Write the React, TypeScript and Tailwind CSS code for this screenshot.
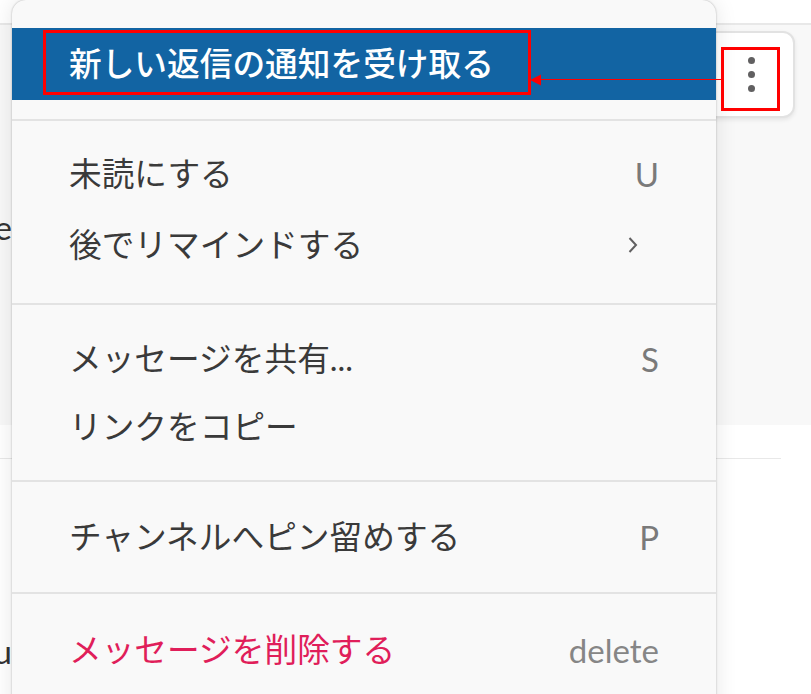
const font = { fontFamily: '"Lato", "Noto Sans CJK JP", sans-serif' };

function Item({ label, hint, top }: { label: string; hint?: React.ReactNode; top: string }) {
  return (
    <div className={`flex items-center justify-between pl-[57px] pr-[57px] ${top}`}>
      <span className="text-[32.7px] leading-[40px] text-[#3a3a3a] whitespace-nowrap">{label}</span>
      {hint}
    </div>
  );
}

function Key({ children }: { children: string }) {
  return <span className="text-[33px] leading-[40px] text-[#7a7a7a]">{children}</span>;
}

export default function App() {
  return (
    <div className="relative w-[811px] h-[694px] overflow-hidden bg-white" style={font}>
      {/* message behind the menu */}
      <div className="h-[25px] border-b-2 border-[#e8e8e8]" />
      <div className="h-[400px] bg-[#f8f8f8] flex items-center">
        <span className="w-[12px] overflow-hidden text-[33px] text-[#333] flex justify-end mb-[-6px]">e</span>
      </div>
      <div className="h-[33px]" />
      <div className="h-[1px] w-[781px] bg-[#e8e8e8]" />
      <div className="pt-[172px] w-[12px] overflow-hidden flex justify-end">
        <span className="text-[33px] leading-[40px] text-[#333]">u</span>
      </div>

      {/* hover toolbar */}
      <div className="absolute left-[690px] top-[31px] w-[105px] h-[87px] bg-white rounded-[12px] border-2 border-[#e2e2e2] shadow-[0_2px_4px_rgba(0,0,0,0.08)]">
        <div className="absolute left-[56px] top-[24px] flex flex-col gap-[7px]">
          <span className="w-[7px] h-[7px] rounded-full bg-[#616061]" />
          <span className="w-[7px] h-[7px] rounded-full bg-[#616061]" />
          <span className="w-[7px] h-[7px] rounded-full bg-[#616061]" />
        </div>
      </div>

      {/* menu */}
      <div className="absolute left-[12px] top-0 w-[704px] h-[720px] bg-[#f9f9f9] rounded-t-[14px] shadow-[0_0_2px_rgba(0,0,0,0.3),0_0_22px_rgba(0,0,0,0.1)]">
        <div className="h-[28px]" />
        <div className="h-[72px] bg-[#1264a3] flex items-center pl-[57px]">
          <span className="text-[32.7px] leading-[40px] text-white font-medium whitespace-nowrap">新しい返信の通知を受け取る</span>
        </div>
        <div className="h-[19px]" />
        <div className="h-[2px] bg-[#e3e3e3]" />
        <Item label="未読にする" hint={<Key>U</Key>} top="pt-[33px]" />
        <Item
          label="後でリマインドする"
          top="pt-[31px]"
          hint={
            <svg width="12" height="18" viewBox="0 0 12 18" className="mr-[20px]" fill="none" stroke="#616061" strokeWidth="2">
              <path d="M2.5 2 9 9 2.5 16" />
            </svg>
          }
        />
        <div className="h-[2px] bg-[#e3e3e3] mt-[38px]" />
        <Item label="メッセージを共有..." hint={<Key>S</Key>} top="pt-[34px]" />
        <Item label="リンクをコピー" top="pt-[28px]" />
        <div className="h-[2px] bg-[#e3e3e3] mt-[33px]" />
        <Item label="チャンネルへピン留めする" hint={<Key>P</Key>} top="pt-[35px]" />
        <div className="h-[2px] bg-[#e3e3e3] mt-[35px]" />
        <div className="flex items-center justify-between pl-[57px] pr-[57px] pt-[36px]">
          <span className="text-[32.7px] leading-[40px] text-[#e01e5a] whitespace-nowrap">メッセージを削除する</span>
          <span className="text-[33px] leading-[40px] text-[#868686]">delete</span>
        </div>
      </div>

      {/* red annotations */}
      <div className="absolute left-[43px] top-[30px] w-[488px] h-[65px] border-[3px] border-[#ff0000]" />
      <div className="absolute left-[721px] top-[47px] w-[59px] h-[64px] border-[3px] border-[#ff0000]" />
      <div className="absolute left-[540px] top-[79px] w-[181px] h-px bg-[#ff0000]" />
      <svg className="absolute left-[530px] top-[74px]" width="12" height="12" viewBox="0 0 12 12">
        <path d="M0 6 11 0.5V11.5Z" fill="#ff0000" />
      </svg>
    </div>
  );
}
